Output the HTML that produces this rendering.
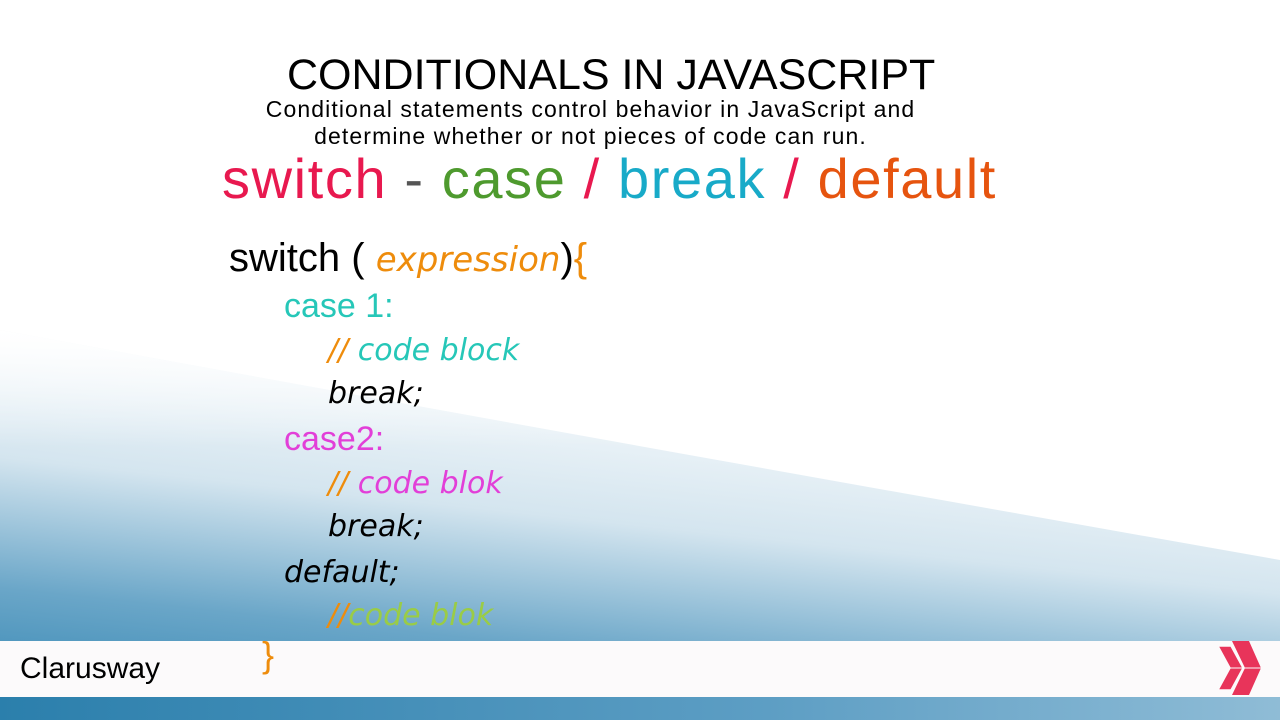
<!DOCTYPE html>
<html><head><meta charset="utf-8"><style>
body{margin:0;width:1280px;height:720px;position:relative;overflow:hidden;background:#fff;font-family:"Liberation Sans",sans-serif}
.t{position:absolute;white-space:nowrap}
.h{font-style:italic;font-family:"DejaVu Sans","Liberation Sans",sans-serif;font-size:30px}
</style></head><body>
<svg width="1280" height="720" style="position:absolute;left:0;top:0">
<defs>
<linearGradient id="g" x1="0" y1="1" x2="0.35" y2="0">
<stop offset="0" stop-color="#2d82b0"/><stop offset="0.3" stop-color="#6aa6c8"/><stop offset="0.6" stop-color="#d4e5ef"/><stop offset="1" stop-color="#ffffff"/></linearGradient>
<linearGradient id="f" x1="0" y1="0" x2="0" y2="1"><stop offset="0" stop-color="#fff"/><stop offset="0.3" stop-color="#fff" stop-opacity="0"/></linearGradient>
<linearGradient id="s" x1="0" y1="0" x2="1" y2="0"><stop offset="0" stop-color="#2b7fac"/><stop offset="0.6" stop-color="#5d9ec4"/><stop offset="1" stop-color="#8fbcd6"/></linearGradient>
</defs>
<path d="M0,330 Q600,440 1280,560 L1280,720 L0,720Z" fill="url(#g)"/>
<path d="M0,330 Q600,440 1280,560 L1280,720 L0,720Z" fill="url(#f)"/>
<rect x="0" y="641" width="1280" height="56" fill="#fcfafb"/>
<rect x="0" y="697" width="1280" height="23" fill="url(#s)"/>
<polygon points="1232,641 1249,641 1261,668 1249,695 1232,695 1245,668" fill="#e8345a"/>
<polygon points="1218,646 1231,646 1243,668 1231,690 1218,690 1230,668" fill="#e8345a" stroke="#fcfafb" stroke-width="1.5"/>
<line x1="1230" y1="668" x2="1261" y2="668" stroke="#fcfafb" stroke-width="1"/>
</svg>
<div class="t" style="left:287px;top:51px;font-size:43px">CONDITIONALS IN JAVASCRIPT</div>
<div class="t" style="left:242px;top:96px;font-size:23px;letter-spacing:1.1px;text-align:center;width:697px;line-height:27px">Conditional statements control behavior in JavaScript and<br>determine whether or not pieces of code can run.</div>
<div class="t" style="left:222px;top:146px;font-size:56px;letter-spacing:1.6px"><span style="color:#e8194f">switch</span> <span style="color:#555">-</span> <span style="color:#4e9a2e">case</span> <span style="color:#e8194f">/</span> <span style="color:#18aac8">break</span> <span style="color:#e8194f">/</span> <span style="color:#e6540f">default</span></div>
<div class="t" style="left:229px;top:236px;font-size:40px">switch ( <span class="h" style="color:#ee8c0c;font-size:34px">expression</span>)<span style="color:#ee8c0c">{</span></div>
<div class="t" style="left:284px;top:287px;font-size:34px;color:#26c7b8">case 1:</div>
<div class="t h" style="left:328px;top:333px"><span style="color:#ee8c0c">//</span> <span style="color:#26c7b8">code block</span></div>
<div class="t h" style="left:328px;top:376px">break;</div>
<div class="t" style="left:284px;top:420px;font-size:34px;color:#e23fd8">case2:</div>
<div class="t h" style="left:328px;top:466px"><span style="color:#ee8c0c">//</span> <span style="color:#e23fd8">code blok</span></div>
<div class="t h" style="left:328px;top:509px">break;</div>
<div class="t h" style="left:284px;top:555px">default;</div>
<div class="t h" style="left:328px;top:598px"><span style="color:#ee8c0c">//</span><span style="color:#9acc46">code blok</span></div>
<div class="t" style="left:262px;top:634px;font-size:36px;color:#ee8c0c">}</div>
<div class="t" style="left:20px;top:652px;font-size:30px">Clarusway</div>
</body></html>
